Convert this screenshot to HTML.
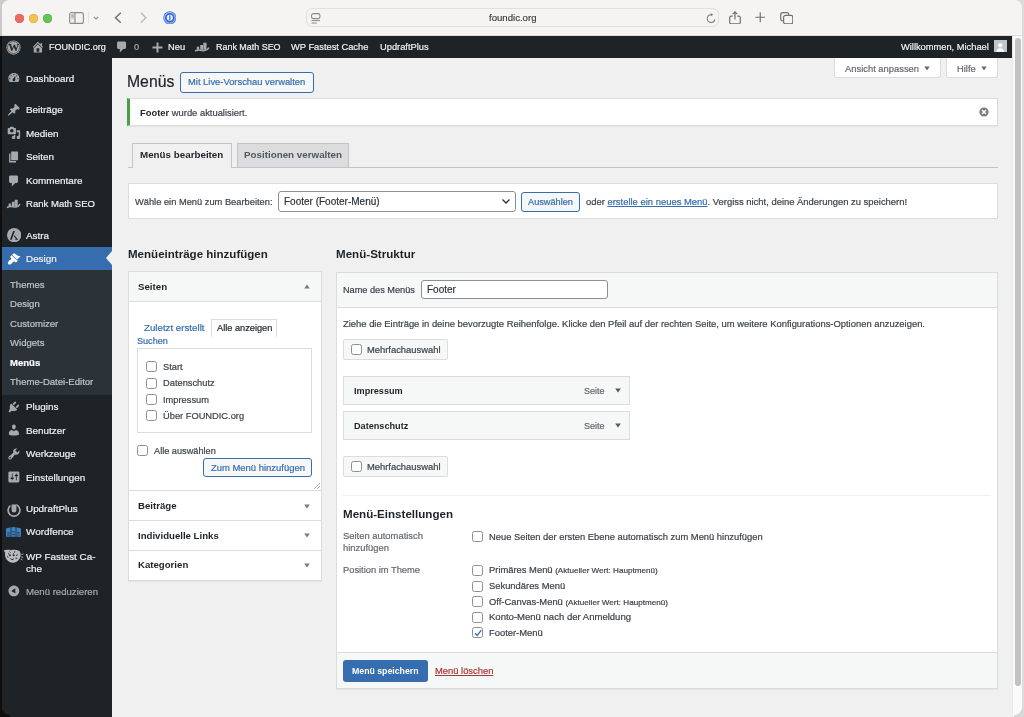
<!DOCTYPE html>
<html><head><meta charset="utf-8">
<style>
*{box-sizing:border-box;margin:0;padding:0}
html,body{width:1024px;height:717px;overflow:hidden;background:#f0f0f1;font-family:"Liberation Sans",sans-serif}
.a{position:absolute}
.t{position:absolute;white-space:nowrap;line-height:12px;height:12px;will-change:transform;-webkit-text-stroke:0.2px currentColor}
#tb{left:0;top:0;width:1024px;height:36px;background:#f5f4f2;border-bottom:1px solid #dedddb}
.dot{position:absolute;width:9px;height:9px;border-radius:50%;top:13.5px}
#ab{left:0;top:36px;width:1012px;height:22px;background:#1d2327;color:#f0f0f1;font-size:9.3px}
#ab .t{top:5px}
#sb{left:0;top:58px;width:112px;height:659px;background:#1d2327;color:#f0f0f1;font-size:9.9px}
#sb .t{left:26.2px;margin-top:0.6px}
#sb svg{position:absolute}
.sub .t{color:#c3c4c7;font-size:9.55px}
.cb{position:absolute;width:11px;height:11px;border:1px solid #8c8f94;border-radius:2.5px;background:#fff}
#sc{left:1012px;top:36px;width:10px;height:681px;background:#fafafa;border-left:1px solid #e8e8e8}
</style></head><body>
<div id="tb" class="a">
  <div class="dot" style="left:14.9px;background:#ee6a5f;box-shadow:inset 0 0 0 0.5px #e0544a"></div>
  <div class="dot" style="left:28.7px;background:#f5bf4f;box-shadow:inset 0 0 0 0.5px #dea43a"></div>
  <div class="dot" style="left:42.5px;background:#61c454;box-shadow:inset 0 0 0 0.5px #4fab43"></div>
  <svg class="a" style="left:68.5px;top:11.5px" width="15" height="12" viewBox="0 0 15 12"><rect x="0.6" y="0.6" width="13.8" height="10.8" rx="2" fill="none" stroke="#8a8a8a" stroke-width="1.1"/><rect x="1.2" y="1.2" width="4.6" height="9.6" fill="#dadada"/><line x1="6" y1="0.6" x2="6" y2="11.4" stroke="#8a8a8a" stroke-width="1.1"/><rect x="2.3" y="2.6" width="2.4" height="1" fill="#9a9a9a"/><rect x="2.3" y="4.4" width="2.4" height="1" fill="#9a9a9a"/><rect x="2.3" y="7.8" width="2.4" height="1.6" fill="#fff"/></svg>
  <div class="a" style="left:88.3px;top:12px;width:1px;height:11px;background:#e4e3e1"></div>
  <svg class="a" style="left:92.5px;top:15.5px" width="6" height="4" viewBox="0 0 6 4"><path d="M0.8 0.8l2.2 2.2 2.2-2.2" fill="none" stroke="#8a8a8a" stroke-width="1.1"/></svg>
  <svg class="a" style="left:114px;top:11.5px" width="8" height="11.5" viewBox="0 0 8 11.5"><path d="M6.8 0.8L1.5 5.75L6.8 10.7" fill="none" stroke="#707070" stroke-width="1.5"/></svg>
  <svg class="a" style="left:139.5px;top:11.5px" width="7" height="11.5" viewBox="0 0 7 11.5"><path d="M1 0.8L5.8 5.75L1 10.7" fill="none" stroke="#b8b8b8" stroke-width="1.4"/></svg>
  <svg class="a" style="left:162.5px;top:10.7px" width="13.6" height="13.6" viewBox="0 0 14 14"><circle cx="7" cy="7" r="6.8" fill="#4a7bdd"/><circle cx="7" cy="7" r="5.5" fill="none" stroke="#b9cdf2" stroke-width="0.9"/><circle cx="7" cy="7" r="4.5" fill="#3466d6"/><circle cx="7" cy="7" r="3.1" fill="#f5f7fc"/><rect x="6.35" y="4.3" width="1.3" height="5.4" rx="0.6" fill="#3466d6"/></svg>
  <div class="a" style="left:305.5px;top:8.2px;width:413px;height:19.2px;border:1px solid #e0dfdd;border-radius:6px;background:#f5f4f2"></div>
  <svg class="a" style="left:311px;top:12.5px" width="9.5" height="11" viewBox="0 0 9.5 11"><rect x="0.6" y="0.6" width="8.3" height="5" rx="1.6" fill="none" stroke="#8a8a8a" stroke-width="1.1"/><line x1="0.5" y1="7.6" x2="9" y2="7.6" stroke="#8a8a8a" stroke-width="1"/><line x1="0.5" y1="10" x2="5.8" y2="10" stroke="#8a8a8a" stroke-width="1"/></svg>
  <div class="t" style="left:489px;top:12.2px;font-size:9.6px;color:#3a3a3a;-webkit-text-stroke:0.15px #3a3a3a">foundic.org</div>
  <svg class="a" style="left:705.5px;top:12px" width="10" height="11" viewBox="0 0 10 11"><path d="M5.1 2.7A3.85 3.85 0 1 0 8.9 7.3" fill="none" stroke="#808080" stroke-width="1.05"/><path d="M4.7 1.1L7.3 2.7L4.7 4.3z" fill="#808080"/></svg>
  <svg class="a" style="left:729px;top:10.5px" width="12" height="13.5" viewBox="0 0 12 13.5"><path d="M3.8 5.2H2.2A1.5 1.5 0 0 0 0.7 6.7v4.6A1.5 1.5 0 0 0 2.2 12.8h7.6a1.5 1.5 0 0 0 1.5-1.5V6.7A1.5 1.5 0 0 0 9.8 5.2H8.2" fill="none" stroke="#707070" stroke-width="1.2"/><path d="M6 8.6V1M3.7 3.2L6 0.9L8.3 3.2" fill="none" stroke="#707070" stroke-width="1.2"/></svg>
  <svg class="a" style="left:754.5px;top:12.3px" width="10.5" height="10.5" viewBox="0 0 10.5 10.5"><path d="M5.25 0.3v9.9M0.3 5.25h9.9" stroke="#707070" stroke-width="1.2"/></svg>
  <svg class="a" style="left:779.5px;top:11.5px" width="13.5" height="12.5" viewBox="0 0 13.5 12.5"><path d="M2.8 8.8A2 2 0 0 1 0.7 6.8V2.7A2 2 0 0 1 2.7 0.7h4.1a2 2 0 0 1 2 2" fill="none" stroke="#707070" stroke-width="1.2"/><rect x="3.6" y="3.4" width="9.2" height="8.5" rx="2" fill="#f5f4f2" stroke="#707070" stroke-width="1.2"/></svg>
</div>
<div id="ab" class="a">
  <svg class="a" style="left:5.5px;top:3.5px" width="15" height="15" viewBox="0 0 20 20"><circle cx="10" cy="10" r="9.5" fill="#a7aaad"/><circle cx="10" cy="10" r="8.1" fill="none" stroke="#1d2327" stroke-width="0.7"/><text x="10.2" y="15.2" font-family="Liberation Serif" font-weight="bold" font-size="14.5" text-anchor="middle" fill="#1d2327">W</text></svg>
  <svg class="a" style="left:30.5px;top:4px" width="13.8" height="13.8" viewBox="0 0 20 20"><path fill="#a7aaad" d="M16 8.5l1.53 1.53-1.06 1.06L10 4.62l-6.47 6.47-1.06-1.06L10 2.5l4 4v-2h2v4zm-6-2.46l6 5.99V18H4v-5.97zM12 17v-5H8v5h4z"/></svg>
  <div class="t" style="left:48.6px;font-size:9.05px">FOUNDIC.org</div>
  <svg class="a" style="left:115px;top:4.3px" width="13.8" height="13.8" viewBox="0 0 20 20"><path fill="#a7aaad" d="M5 2h9c1.1 0 2 .9 2 2v7c0 1.1-.9 2-2 2h-2l-5 5v-5H5c-1.1 0-2-.9-2-2V4c0-1.1.9-2 2-2z"/></svg>
  <div class="t" style="left:134px;color:#a7aaad">0</div>
  <svg class="a" style="left:151.5px;top:6px" width="11" height="11" viewBox="0 0 11 11"><path d="M5.5 0.5v10M0.5 5.5h10" stroke="#a7aaad" stroke-width="2"/></svg>
  <div class="t" style="left:167.5px">Neu</div>
  <svg class="a" style="left:194px;top:5px" width="16" height="12" viewBox="0 0 16 12"><path d="M2.8 5.8h2.4v3H2.8zM6.2 4h2.8v4.8H6.2zM9.3 1.8h3.2v7H9.3z" fill="#a7aaad"/><path d="M1 10.2Q3.5 8.6 6 9.2T10.5 9.6Q13.5 9.2 15 6.6" stroke="#a7aaad" stroke-width="1.5" fill="none"/></svg>
  <div class="t" style="left:215.6px;font-size:8.95px">Rank Math SEO</div>
  <div class="t" style="left:291.2px">WP Fastest Cache</div>
  <div class="t" style="left:379.9px">UpdraftPlus</div>
  <div class="t" style="left:901.3px">Willkommen, Michael</div>
  <div class="a" style="left:994.4px;top:4.2px;width:12.3px;height:12.3px;background:#c3c4c7;overflow:hidden"><svg width="12.3" height="12.3" viewBox="0 0 12 12" style="display:block"><circle cx="6" cy="5.2" r="2.1" fill="#fff"/><path d="M2.2 12c0-2.6 1.6-4 3.8-4s3.8 1.4 3.8 4z" fill="#fff"/></svg></div>
</div>
<div id="sb" class="a">
  <div class="t" style="top:14.1px">Dashboard</div>
  <svg style="left:7.0px;top:13.2px" width="13.8" height="13.8" viewBox="0 0 20 20"><path fill="#a7aaad" d="M3.76 16h12.48c1.1-1.37 1.76-3.11 1.76-5 0-4.42-3.58-8-8-8s-8 3.58-8 8c0 1.89.66 3.63 1.76 5zM10 4c.55 0 1 .45 1 1s-.45 1-1 1-1-.45-1-1 .45-1 1-1zM6 6c.55 0 1 .45 1 1s-.45 1-1 1-1-.45-1-1 .45-1 1-1zm8 0c.55 0 1 .45 1 1s-.45 1-1 1-1-.45-1-1 .45-1 1-1zm-5.37 5.55L12 7v6c0 1.1-.9 2-2 2s-2-.9-2-2c0-.57.24-1.08.63-1.45zM4 10c.55 0 1 .45 1 1s-.45 1-1 1-1-.45-1-1 .45-1 1-1zm12 0c.55 0 1 .45 1 1s-.45 1-1 1-1-.45-1-1 .45-1 1-1z" fill-rule="evenodd"/></svg>
  <div class="t" style="top:45.6px">Beiträge</div>
  <svg style="left:7.0px;top:44.7px" width="13.8" height="13.8" viewBox="0 0 20 20"><path fill="#a7aaad" d="M10.44 3.02l1.82-1.82 6.36 6.35-1.83 1.82c-1.05-.68-2.48-.57-3.41.36l-.75.75c-.92.93-1.04 2.35-.35 3.41l-1.83 1.82-2.41-2.41-2.8 2.79c-.42.42-3.38 2.71-3.8 2.29s1.86-3.39 2.28-3.81l2.79-2.79L4.1 9.36l1.83-1.82c1.05.69 2.48.57 3.4-.36l.75-.75c.93-.92 1.05-2.35.36-3.41z"/></svg>
  <div class="t" style="top:69.3px">Medien</div>
  <svg style="left:7.0px;top:68.4px" width="13.8" height="13.8" viewBox="0 0 20 20"><path fill="#a7aaad" fill-rule="evenodd" d="M13 11V4c0-.55-.45-1-1-1h-1.67L9 1H5L3.67 3H2c-.55 0-1 .45-1 1v7c0 .55.45 1 1 1h10c.55 0 1-.45 1-1zM7 4.5c1.38 0 2.5 1.12 2.5 2.5S8.38 9.5 7 9.5 4.5 8.38 4.5 7 5.62 4.5 7 4.5zM14 6h5v10.5c0 1.38-1.12 2.5-2.5 2.5S14 17.88 14 16.5s1.12-2.5 2.5-2.5c.17 0 .34.02.5.05V9h-3V6zm-4 8.05V13h2v3.5c0 1.38-1.12 2.5-2.5 2.5S7 17.88 7 16.5 8.12 14 9.5 14c.17 0 .34.02.5.05z"/></svg>
  <div class="t" style="top:92.8px">Seiten</div>
  <svg style="left:7.0px;top:91.9px" width="13.8" height="13.8" viewBox="0 0 20 20"><path fill="#a7aaad" d="M6 15V2h10v13H6zm-1 1h8v2H3V5h2v11z"/></svg>
  <div class="t" style="top:116.4px">Kommentare</div>
  <svg style="left:7.0px;top:115.5px" width="13.8" height="13.8" viewBox="0 0 20 20"><path fill="#a7aaad" d="M5 2h9c1.1 0 2 .9 2 2v7c0 1.1-.9 2-2 2h-2l-5 5v-5H5c-1.1 0-2-.9-2-2V4c0-1.1.9-2 2-2z"/></svg>
  <div class="t" style="top:139.5px;font-size:9.55px">Rank Math SEO</div>
  <svg style="left:6px;top:139.8px" width="15" height="11.2" viewBox="0 0 16 12"><path d="M2.8 5.8h2.4v3H2.8zM6.2 4h2.8v4.8H6.2zM9.3 1.8h3.2v7H9.3z" fill="#a7aaad"/><path d="M1 10.2Q3.5 8.6 6 9.2T10.5 9.6Q13.5 9.2 15 6.6" stroke="#a7aaad" stroke-width="1.6" fill="none"/></svg>
  <div class="t" style="top:171.0px">Astra</div>
  <svg style="left:6.8px;top:169.8px" width="14.3" height="14.3" viewBox="0 0 20 20"><circle cx="10" cy="10" r="10" fill="#a7aaad"/><path d="M8.6 4.3H11L6.6 16.3H4.2z" fill="#1d2327"/><path d="M10.4 10.3L15.6 16.3H11.2L12.4 14.5L9.7 12.2z" fill="#1d2327"/></svg>
  <div class="a" style="left:0;top:188.7px;width:112px;height:23.3px;background:#356dae"></div>
  <svg style="left:106px;top:193.3px" width="6" height="14" viewBox="0 0 6 14"><path d="M6 0v14L0 7z" fill="#f0f0f1"/></svg>
  <div class="t" style="top:194.4px">Design</div>
  <svg style="left:7.0px;top:193.5px" width="13.8" height="13.8" viewBox="0 0 20 20"><path fill="#fff" d="M14.48 11.06L7.41 3.99l1.5-1.5c.5-.56 2.3-.47 3.51.32 1.21.8 1.43 1.28 2.91 2.1 1.18.64 2.45 1.26 4.45.85zm-.71.71L6.7 4.7 4.93 6.47c-.39.39-.39 1.02 0 1.41l1.06 1.06c.39.39.39 1.03 0 1.42-.6.6-1.43 1.11-2.21 1.69-.35.26-.7.53-1.01.84C1.43 14.23.4 16.08 1.94 17.62c.34.34.7.52 1.07.6 1.64.39 3.41-1.24 4.79-2.68.38-.38.75-.73 1.14-1.030.4-.31.8-.56 1.18-.68.5-.18.98-.03 1.33.32l.66.67c.39.39 1.02.39 1.42 0l2.25-2.25z"/></svg>
  <div class="a sub" style="left:0;top:212px;width:112px;height:125.2px;background:#2c3338">
    <div class="t" style="left:10.3px;top:8.2px">Themes</div>
    <div class="t" style="left:10.3px;top:27.8px">Design</div>
    <div class="t" style="left:10.3px;top:47.2px">Customizer</div>
    <div class="t" style="left:10.3px;top:66.8px">Widgets</div>
    <div class="t" style="left:10.3px;top:86.0px;color:#fff;font-weight:bold">Menüs</div>
    <div class="t" style="left:10.3px;top:105.3px">Theme-Datei-Editor</div>
  </div>
  <div class="t" style="top:342.7px">Plugins</div>
  <svg style="left:7.0px;top:341.8px" width="13.8" height="13.8" viewBox="0 0 20 20"><path fill="#a7aaad" d="M13.11 4.36L9.87 7.6 8 5.73l3.24-3.24c.35-.34 1.05-.2 1.56.32.52.51.66 1.21.31 1.55zm-8 1.77l.91-1.12 9.01 9.01-1.19.84c-.71.71-2.63 1.16-3.820 1.16H6.14L4.9 17.26c-.59.59-1.54.59-2.12 0-.59-.58-.59-1.53 0-2.12l1.24-1.24v-3.88c0-1.13.4-3.19 1.09-3.89zm7.26 3.97l3.24-3.24c.34-.35 1.04-.21 1.55.31.52.51.66 1.21.31 1.55l-3.24 3.25z"/></svg>
  <div class="t" style="top:366.2px">Benutzer</div>
  <svg style="left:7.0px;top:365.3px" width="13.8" height="13.8" viewBox="0 0 20 20"><path fill="#a7aaad" d="M10 9.25c-2.27 0-2.73-3.44-2.73-3.44C7 4.02 7.82 2 9.97 2c2.16 0 2.98 2.02 2.71 3.81 0 0-.41 3.44-2.68 3.44zm0 2.57L12.72 10c2.39 0 4.52 2.33 4.52 4.53v2.49s-3.65 1.13-7.24 1.13c-3.65 0-7.24-1.13-7.24-1.130v-2.49c0-2.25 1.94-4.48 4.47-4.48z"/></svg>
  <div class="t" style="top:389.6px">Werkzeuge</div>
  <svg style="left:7.0px;top:388.7px" width="13.8" height="13.8" viewBox="0 0 20 20"><path fill="#a7aaad" fill-rule="evenodd" d="M16.68 9.77c-1.34 1.34-3.3 1.67-4.95.99l-5.41 6.52c-.99.99-2.59.99-3.58 0s-.99-2.59 0-3.57l6.52-5.42c-.68-1.65-.35-3.61.99-4.95 1.28-1.28 3.12-1.620 4.72-1.06l-2.89 2.89 2.82 2.82 2.86-2.87c.53 1.58.18 3.39-1.08 4.65zM3.81 16.21c.4.39 1.04.39 1.43 0 .4-.4.4-1.04 0-1.43-.39-.4-1.03-.4-1.43 0-.39.39-.39 1.03 0 1.43z"/></svg>
  <div class="t" style="top:413.0px">Einstellungen</div>
  <svg style="left:7.0px;top:412.1px" width="13.8" height="13.8" viewBox="0 0 20 20"><path fill="#a7aaad" fill-rule="evenodd" d="M18 16V4c0-1.1-.9-2-2-2H4c-1.1 0-2 .9-2 2v12c0 1.1.9 2 2 2h12c1.1 0 2-.9 2-2zM8 11h1c.55 0 1 .45 1 1s-.45 1-1 1H8v1.5c0 .28-.22.5-.5.5s-.5-.22-.5-.5V13H6c-.55 0-1-.45-1-1s.45-1 1-1h1V5.5c0-.28.22-.5.5-.5s.5.22.5.5V11zm5-2h-1c-.55 0-1-.45-1-1s.45-1 1-1h1V5.5c0-.28.22-.5.5-.5s.5.22.5.5V7h1c.55 0 1 .45 1 1s-.45 1-1 1h-1v5.5c0 .28-.22.5-.5.5s-.5-.22-.5-.5V9z"/></svg>
  <div class="t" style="top:444.4px">UpdraftPlus</div>
  <svg style="left:6.8px;top:445.6px" width="14" height="13" viewBox="0 0 14 13"><path d="M3.4 1.6A5.9 5.9 0 1 0 10.6 1.6" fill="none" stroke="#a7aaad" stroke-width="1.7"/><path d="M4.6 0.6h4.8v5.6a2.4 2.4 0 0 1-4.8 0z" fill="#a7aaad"/><path d="M9.4 0.6l1.6 1.2" stroke="#a7aaad" stroke-width="1.2"/></svg>
  <div class="t" style="top:467.8px">Wordfence</div>
  <svg style="left:6.3px;top:468.4px" width="15" height="11" viewBox="0 0 15 11"><path d="M0 2.6Q7.5 -0.6 15 2.6V10.8H0z" fill="#3b82c4"/><path d="M5 1.2V10.8M10 1.2V10.8" stroke="#1d2327" stroke-width="0.8"/><path d="M1.2 6.8h2.8M6 5.8h3M11 6.8h2.8M1.2 9h2.6M6.2 8.6h2.6M11.2 9h2.6" stroke="#1d2327" stroke-width="0.7"/></svg>
  <div class="t" style="top:492.1px">WP Fastest Ca-</div>
  <div class="t" style="top:504.2px">che</div>
  <svg style="left:3.3px;top:491.0px" width="20.5" height="14" viewBox="0 0 20.5 14"><path d="M0.5 1.5C3 0.5 5.5 0.8 8 1.2c2.5-.6 5.5-.6 8.5.8 1.2 1.5 1.4 3.5 1 5.5-.8 3-3.2 5.6-6.5 6.2-3.3.4-6-1.2-7.8-3.6C2 8 1.8 5.5 2.2 3.5z" fill="#b9bbbe"/><path d="M18.5 5.5l2 -.5M18.2 8l2 .3M17.8 10l1.8 1" stroke="#b9bbbe" stroke-width="0.9"/><path d="M5 4.5l1.6 1M11 4.5l-1.5 1.2M7.5 9.5l1.5 1.3 1.8-1M4 7.5l1.5.8M13 6.5l1.8-.8M12.5 9l1.8.3M6.5 2.5l1 1.2M12 2.2l-.5 1.4" stroke="#1d2327" stroke-width="0.9" fill="none"/><circle cx="7" cy="6.3" r="0.9" fill="#1d2327"/><circle cx="10.8" cy="6.3" r="0.9" fill="#1d2327"/></svg>
  <div class="t" style="top:527.2px;color:#a7aaad;font-size:9.6px">Menü reduzieren</div>
  <svg style="left:7.0px;top:526.3px" width="13.8" height="13.8" viewBox="0 0 20 20"><path fill="#a7aaad" d="M10 2.16c4.33 0 7.84 3.51 7.84 7.84S14.33 17.84 10 17.84 2.16 14.33 2.16 10 5.71 2.16 10 2.16zm2 11.72V6.12L6.18 9.97z"/></svg>
</div>
<div id="main">
<div class="a" style="left:833.9px;top:58px;width:106.7px;height:20.1px;background:#fff;border:1px solid #dcdcde;border-top:none;border-radius:0 0 3px 3px"></div>
<div class="t" style="left:845px;top:62.8px;font-size:9.4px;color:#646970">Ansicht anpassen</div>
<svg class="a" style="left:923.5px;top:65.5px" width="6" height="5" viewBox="0 0 6 5"><path d="M0.3 0.5h5.4L3 4.6z" fill="#646970"/></svg>
<div class="a" style="left:945.8px;top:58px;width:52.0px;height:20.1px;background:#fff;border:1px solid #dcdcde;border-top:none;border-radius:0 0 3px 3px"></div>
<div class="t" style="left:957.3px;top:62.8px;font-size:9.4px;color:#646970">Hilfe</div>
<svg class="a" style="left:980.5px;top:65.5px" width="6" height="5" viewBox="0 0 6 5"><path d="M0.3 0.5h5.4L3 4.6z" fill="#646970"/></svg>
<div class="t" style="left:126.7px;top:76.2px;font-size:15.75px;color:#1d2327">Menüs</div>
<div class="a" style="left:180.2px;top:72.2px;width:134.3px;height:20.4px;border:1px solid #356dae;border-radius:3px;background:#f6f7f7"></div>
<div class="t" style="left:187.8px;top:76.4px;font-size:9.4px;color:#356dae">Mit Live-Vorschau verwalten</div>
<div class="a" style="left:127px;top:98px;width:871.2px;height:28.0px;background:#fff;border:1px solid #dcdcde;border-left:3.2px solid #48a13e;box-shadow:0 1px 1px rgba(0,0,0,.04)"></div>
<div class="t" style="left:140px;top:106.5px;font-size:9.4px;color:#3c434a"><b style="color:#1d2327;-webkit-text-stroke:0">Footer</b> wurde aktualisiert.</div>
<svg class="a" style="left:978.5px;top:107px" width="10" height="10" viewBox="0 0 10 10"><circle cx="5" cy="5" r="4.6" fill="#787c82"/><path d="M3 3l4 4M7 3l-4 4" stroke="#fff" stroke-width="1.6"/></svg>
<div class="a" style="left:127.5px;top:167px;width:870.7px;height:1.0px;background:#c3c4c7"></div>
<div class="a" style="left:132.2px;top:142.9px;width:99.6px;height:25.1px;background:#f0f0f1;border:1px solid #c3c4c7;border-bottom:none"></div>
<div class="a" style="left:237.2px;top:142.9px;width:111.8px;height:24.6px;background:#dcdcde;border:1px solid #c3c4c7;border-bottom:none"></div>
<div class="t" style="left:140.4px;top:149.3px;font-size:9.8px;color:#1d2327;font-weight:bold;-webkit-text-stroke:0">Menüs bearbeiten</div>
<div class="t" style="left:244.2px;top:149.3px;font-size:9.8px;color:#50575e;font-weight:bold;-webkit-text-stroke:0">Positionen verwalten</div>
<div class="a" style="left:127.5px;top:183.4px;width:870.7px;height:36.1px;background:#fff;border:1px solid #dcdcde"></div>
<div class="t" style="left:135.2px;top:195.8px;font-size:9.3px;color:#3c434a">Wähle ein Menü zum Bearbeiten:</div>
<div class="a" style="left:278.2px;top:191.4px;width:237.8px;height:20.2px;background:#fff;border:1px solid #8c8f94;border-radius:3px"></div>
<div class="t" style="left:284px;top:195.5px;font-size:10px;color:#2c3338">Footer (Footer-Menü)</div>
<svg class="a" style="left:501px;top:198px" width="10" height="7" viewBox="0 0 10 7"><path d="M1.5 1.5l3.5 3.5 3.5-3.5" fill="none" stroke="#2c3338" stroke-width="1.3"/></svg>
<div class="a" style="left:520.5px;top:191.5px;width:59.8px;height:20.0px;border:1px solid #356dae;border-radius:3px;background:#f6f7f7"></div>
<div class="t" style="left:528.1px;top:195.5px;font-size:9.2px;color:#356dae">Auswählen</div>
<div class="t" style="left:585.5px;top:195.8px;font-size:9.43px;color:#3c434a">oder <span style="color:#356dae;text-decoration:underline">erstelle ein neues Menü</span>. Vergiss nicht, deine Änderungen zu speichern!</div>
<div class="t" style="left:127.8px;top:247.6px;font-size:11.56px;color:#1d2327;font-weight:bold;-webkit-text-stroke:0">Menüeinträge hinzufügen</div>
<div class="a" style="left:127.6px;top:271.4px;width:194.4px;height:309.6px;background:#fff;border:1px solid #dcdcde;box-shadow:0 1px 1px rgba(0,0,0,.04)"></div>
<div class="a" style="left:128.6px;top:272.4px;width:192.4px;height:29.9px;background:#f6f7f7;border-bottom:1px solid #dcdcde"></div>
<div class="t" style="left:138px;top:281.0px;font-size:9.7px;color:#1d2327;font-weight:bold;-webkit-text-stroke:0">Seiten</div>
<svg class="a" style="left:304px;top:284px" width="6" height="5" viewBox="0 0 6 5"><path d="M0.2 4.6h5.6L3 0.4z" fill="#787c82"/></svg>
<div class="t" style="left:143.6px;top:322.0px;font-size:9.72px;color:#356dae">Zuletzt erstellt</div>
<div class="a" style="left:211.3px;top:319.4px;width:65.6px;height:17.6px;background:#fff;border:1px solid #dcdcde;border-bottom:none"></div>
<div class="t" style="left:217.4px;top:322.0px;font-size:9.23px;color:#1d2327">Alle anzeigen</div>
<div class="t" style="left:137.4px;top:334.5px;font-size:9.08px;color:#356dae">Suchen</div>
<div class="a" style="left:137.4px;top:348.4px;width:175.0px;height:84.3px;background:#fff;border:1px solid #dcdcde"></div>
<div class="cb" style="left:146.1px;top:361.1px"></div>
<div class="t" style="left:162.5px;top:360.6px;font-size:9.3px;color:#3c434a">Start</div>
<div class="cb" style="left:146.1px;top:377.8px"></div>
<div class="t" style="left:162.5px;top:377.3px;font-size:9.3px;color:#3c434a">Datenschutz</div>
<div class="cb" style="left:146.1px;top:394.1px"></div>
<div class="t" style="left:162.5px;top:393.6px;font-size:9.3px;color:#3c434a">Impressum</div>
<div class="cb" style="left:146.1px;top:410.2px"></div>
<div class="t" style="left:162.5px;top:409.7px;font-size:9.3px;color:#3c434a">Über FOUNDIC.org</div>
<div class="cb" style="left:137.4px;top:445.4px"></div>
<div class="t" style="left:153.5px;top:444.9px;font-size:9.2px;color:#3c434a">Alle auswählen</div>
<div class="a" style="left:203.2px;top:457.5px;width:109.2px;height:19.9px;border:1px solid #356dae;border-radius:3px;background:#f6f7f7"></div>
<div class="t" style="left:210.6px;top:461.5px;font-size:9.45px;color:#356dae">Zum Menü hinzufügen</div>
<svg class="a" style="left:313px;top:482px" width="8" height="8" viewBox="0 0 8 8"><path d="M7 1L1 7M7 4L4 7" stroke="#a7aaad" stroke-width="0.8"/></svg>
<div class="a" style="left:128.6px;top:490.3px;width:192.4px;height:1.0px;background:#dcdcde"></div>
<div class="a" style="left:128.6px;top:520.4px;width:192.4px;height:1.0px;background:#dcdcde"></div>
<div class="a" style="left:128.6px;top:550.3px;width:192.4px;height:1.0px;background:#dcdcde"></div>
<div class="t" style="left:138px;top:500.0px;font-size:9.65px;color:#1d2327;font-weight:bold;-webkit-text-stroke:0">Beiträge</div>
<svg class="a" style="left:304px;top:503.7px" width="6" height="5" viewBox="0 0 6 5"><path d="M0.2 0.4h5.6L3 4.6z" fill="#787c82"/></svg>
<div class="t" style="left:138px;top:529.5px;font-size:9.65px;color:#1d2327;font-weight:bold;-webkit-text-stroke:0">Individuelle Links</div>
<svg class="a" style="left:304px;top:533.2px" width="6" height="5" viewBox="0 0 6 5"><path d="M0.2 0.4h5.6L3 4.6z" fill="#787c82"/></svg>
<div class="t" style="left:138px;top:559.0px;font-size:9.65px;color:#1d2327;font-weight:bold;-webkit-text-stroke:0">Kategorien</div>
<svg class="a" style="left:304px;top:562.7px" width="6" height="5" viewBox="0 0 6 5"><path d="M0.2 0.4h5.6L3 4.6z" fill="#787c82"/></svg>
<div class="t" style="left:335.7px;top:247.6px;font-size:11.6px;color:#1d2327;font-weight:bold;-webkit-text-stroke:0">Menü-Struktur</div>
<div class="a" style="left:335.5px;top:271.7px;width:662.7px;height:417.8px;background:#fff;border:1px solid #dcdcde;box-shadow:0 1px 1px rgba(0,0,0,.04)"></div>
<div class="a" style="left:336.5px;top:272.7px;width:660.7px;height:35.1px;background:#f6f7f7;border-bottom:1px solid #dcdcde"></div>
<div class="t" style="left:343px;top:284.0px;font-size:9.19px;color:#3c434a">Name des Menüs</div>
<div class="a" style="left:421.2px;top:279.6px;width:186.9px;height:19.9px;background:#fff;border:1px solid #8c8f94;border-radius:3px"></div>
<div class="t" style="left:427.1px;top:283.6px;font-size:10px;color:#2c3338">Footer</div>
<div class="t" style="left:343px;top:317.8px;font-size:9.42px;color:#3c434a">Ziehe die Einträge in deine bevorzugte Reihenfolge. Klicke den Pfeil auf der rechten Seite, um weitere Konfigurations-Optionen anzuzeigen.</div>
<div class="a" style="left:343px;top:339.1px;width:105.1px;height:20.7px;background:#f6f7f7;border:1px solid #dcdcde;border-radius:2px"></div>
<div class="cb" style="left:350.5px;top:344.0px"></div>
<div class="t" style="left:366.8px;top:343.5px;font-size:9.39px;color:#3c434a">Mehrfachauswahl</div>
<div class="a" style="left:343px;top:456.4px;width:105.1px;height:20.6px;background:#f6f7f7;border:1px solid #dcdcde;border-radius:2px"></div>
<div class="cb" style="left:350.5px;top:461.2px"></div>
<div class="t" style="left:366.8px;top:460.7px;font-size:9.39px;color:#3c434a">Mehrfachauswahl</div>
<div class="a" style="left:343px;top:376.2px;width:286.7px;height:28.8px;background:#f6f7f7;border:1px solid #dcdcde"></div>
<div class="t" style="left:354.2px;top:384.6px;font-size:9.15px;color:#1d2327;font-weight:bold;-webkit-text-stroke:0">Impressum</div>
<div class="t" style="left:584.3px;top:384.6px;font-size:9.0px;color:#646970">Seite</div>
<svg class="a" style="left:614.5px;top:388.1px" width="6" height="5" viewBox="0 0 6 5"><path d="M0.2 0.4h5.6L3 4.6z" fill="#50575e"/></svg>
<div class="a" style="left:343px;top:411.3px;width:286.7px;height:28.8px;background:#f6f7f7;border:1px solid #dcdcde"></div>
<div class="t" style="left:354.2px;top:419.7px;font-size:9.15px;color:#1d2327;font-weight:bold;-webkit-text-stroke:0">Datenschutz</div>
<div class="t" style="left:584.3px;top:419.7px;font-size:9.0px;color:#646970">Seite</div>
<svg class="a" style="left:614.5px;top:423.2px" width="6" height="5" viewBox="0 0 6 5"><path d="M0.2 0.4h5.6L3 4.6z" fill="#50575e"/></svg>
<div class="a" style="left:343px;top:495px;width:648.0px;height:1.0px;background:#f0f0f1"></div>
<div class="t" style="left:343.2px;top:508.0px;font-size:11.58px;color:#1d2327;font-weight:bold;-webkit-text-stroke:0">Menü-Einstellungen</div>
<div class="t" style="left:343px;top:530.0px;font-size:9.41px;color:#646970">Seiten automatisch</div>
<div class="t" style="left:343px;top:542.4px;font-size:9.41px;color:#646970">hinzufügen</div>
<div class="t" style="left:343px;top:563.7px;font-size:9.32px;color:#646970">Position im Theme</div>
<div class="cb" style="left:472.2px;top:531.0px"></div>
<div class="t" style="left:488.8px;top:530.5px;font-size:9.37px;color:#3c434a">Neue Seiten der ersten Ebene automatisch zum Menü hinzufügen</div>
<div class="cb" style="left:472.2px;top:564.7px"></div>
<div class="t" style="left:488.8px;top:564.2px;font-size:9.4px;color:#3c434a">Primäres Menü <span style="font-size:8.1px">(Aktueller Wert: Hauptmenü)</span></div>
<div class="cb" style="left:472.2px;top:580.5px"></div>
<div class="t" style="left:488.8px;top:580.0px;font-size:9.4px;color:#3c434a">Sekundäres Menü</div>
<div class="cb" style="left:472.2px;top:596.1px"></div>
<div class="t" style="left:488.8px;top:595.6px;font-size:9.4px;color:#3c434a">Off-Canvas-Menü <span style="font-size:8.1px">(Aktueller Wert: Hauptmenü)</span></div>
<div class="cb" style="left:472.2px;top:611.6px"></div>
<div class="t" style="left:488.8px;top:611.1px;font-size:9.4px;color:#3c434a"><span style="font-size:9.54px">Konto-Menü nach der Anmeldung</span></div>
<div class="cb" style="left:472.2px;top:627.1px"></div>
<svg class="a" style="left:473.2px;top:628.1px" width="10" height="10" viewBox="0 0 10 10"><path d="M2 5.2l2.2 2.3L8.3 2.2" fill="none" stroke="#356dae" stroke-width="1.3"/></svg>
<div class="t" style="left:488.8px;top:626.6px;font-size:9.4px;color:#3c434a">Footer-Menü</div>
<div class="a" style="left:336.5px;top:652.1px;width:660.7px;height:36.4px;background:#f6f7f7;border-top:1px solid #dcdcde"></div>
<div class="a" style="left:343px;top:660px;width:84.9px;height:22.1px;background:#356dae;border-radius:3px"></div>
<div class="t" style="left:352.4px;top:665.0px;font-size:8.74px;color:#fff;font-weight:bold;-webkit-text-stroke:0">Menü speichern</div>
<div class="t" style="left:434.8px;top:665.0px;font-size:9.4px;color:#a53934;text-decoration:underline">Menü löschen</div>
</div>
<div id="sc" class="a"><div class="a" style="left:2px;top:2px;width:6px;height:648px;border-radius:3px;background:#c2c2c2"></div></div>
<div class="a" style="left:0;top:0;width:2px;height:36px;background:#c9c9c9"></div>
<div class="a" style="left:0;top:36px;width:1.6px;height:681px;background:#0e0e0e"></div>
<div class="a" style="left:1022px;top:0;width:2px;height:717px;background:#dcdcdc"></div>
<svg class="a" style="left:0;top:0" width="10" height="10" viewBox="0 0 10 10"><path d="M0 0H9.5A7.8 7.8 0 0 0 1.7 7.8V10H0z" fill="#cbcbcb"/></svg>
<svg class="a" style="left:1014px;top:0" width="10" height="10" viewBox="0 0 10 10"><path d="M10 0H0.5A7.5 7.5 0 0 1 8 7.5V10H10z" fill="#dcdcdc"/></svg>
<svg class="a" style="left:0;top:707px" width="10" height="10" viewBox="0 0 10 10"><path d="M0 0H1.7A8.3 8.3 0 0 0 10 8.3V10H0z" fill="#0e0e0e"/></svg>
<svg class="a" style="left:1014px;top:707px" width="10" height="10" viewBox="0 0 10 10"><path d="M10 0H8A8 8 0 0 1 0 8V10H10z" fill="#d8d8d8"/></svg>
</body></html>
